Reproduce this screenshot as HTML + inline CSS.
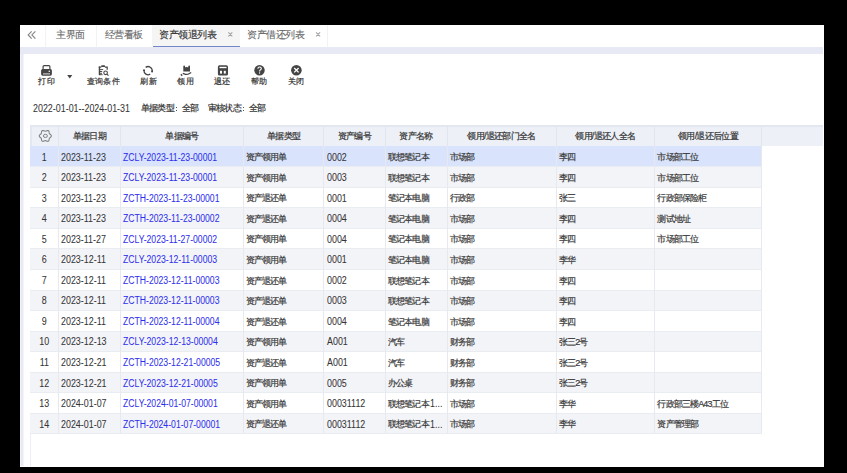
<!DOCTYPE html>
<html><head><meta charset="utf-8"><style>
html,body{margin:0;padding:0}
body{width:847px;height:473px;background:#000;position:relative;overflow:hidden;font-family:"Liberation Sans",sans-serif;color:#333}
.a{position:absolute}
.t{position:absolute;white-space:nowrap;line-height:1}
svg{position:absolute;left:0;top:0;overflow:visible}
</style></head><body>
<div class="a" style="left:20px;top:25px;width:804px;height:442px;background:#fff"></div>
<div class="a" style="left:45px;top:25px;width:1px;height:22px;background:#f2f2f2"></div>
<div class="a" style="left:96px;top:25px;width:1px;height:22px;background:#f2f2f2"></div>
<div class="a" style="left:152px;top:25px;width:87.5px;height:21px;background:#f5f5f5"></div>
<div class="a" style="left:152.5px;top:45.5px;width:87px;height:2px;background:#7485c9"></div>
<div class="a" style="left:327px;top:25px;width:1px;height:22px;background:#f2f2f2"></div>
<svg width="847" height="473"><path d="M31.7 31.3 L28.2 34.9 L31.7 38.6 M35.4 31.3 L31.9 34.9 L35.4 38.6" fill="none" stroke="#888" stroke-width="1.2"/><path d="M228.4 32.4 L232.3 36.4 M232.3 32.4 L228.4 36.4 M316.1 32.4 L320.1 36.4 M320.1 32.4 L316.1 36.4" fill="none" stroke="#a3a3a3" stroke-width="1.1"/></svg>
<div class="t" style="left:56px;top:30px;font-size:10px;color:#666;-webkit-text-stroke:0.1px #666;letter-spacing:-0.5px;">主界面</div>
<div class="t" style="left:104.5px;top:30px;font-size:10px;color:#666;-webkit-text-stroke:0.1px #666;letter-spacing:-0.5px;">经营看板</div>
<div class="t" style="left:159px;top:30px;font-size:10px;color:#333;-webkit-text-stroke:0.15px #333;letter-spacing:-0.5px;">资产领退列表</div>
<div class="t" style="left:247px;top:30px;font-size:10px;color:#666;-webkit-text-stroke:0.1px #666;letter-spacing:-0.5px;">资产借还列表</div>
<div class="a" style="left:20px;top:47px;width:803px;height:7px;background:#e7eaf4"></div>
<div class="a" style="left:20px;top:54px;width:1px;height:412px;background:#f1f3f9"></div>
<div class="a" style="left:21px;top:54px;width:2px;height:412px;background:#e7eaf4"></div>
<div class="a" style="left:23px;top:54px;width:1px;height:412px;background:#f3f5fa"></div>
<div class="a" style="left:30px;top:146px;width:1px;height:320px;background:#eceef4"></div>
<svg width="847" height="473">
<rect x="43.1" y="65.6" width="6.8" height="4.6" rx="1" fill="none" stroke="#444" stroke-width="1.2"/>
<rect x="41.1" y="69" width="10.8" height="6.7" rx="1.6" fill="#444"/>
<circle cx="49.3" cy="71.2" r="0.8" fill="#fff"/>
<rect x="43" y="73.4" width="7" height="1" fill="#ddd"/>
<path d="M67.2 75 L72.3 75 L69.75 78.6 Z" fill="#444"/>
<path d="M99.45 66.6 V75.1" stroke="#444" stroke-width="1.4"/>
<path d="M98.8 67.2 H101.3 M104.9 67.2 H107.2 V69.7" fill="none" stroke="#444" stroke-width="1.2"/>
<rect x="101.2" y="65.2" width="3.8" height="1.9" rx="0.6" fill="#444"/>
<path d="M99.2 69.6 H103.2 M99.2 71.5 H102.2 M99.2 73.3 H102 M99.2 74.7 H102.6" stroke="#444" stroke-width="0.95"/>
<circle cx="105.6" cy="72.8" r="1.8" fill="none" stroke="#444" stroke-width="1.1"/>
<path d="M106.9 74.1 L108.5 75.6" stroke="#444" stroke-width="1.1"/>
<path d="M145.63 67.38 A4.1 4.1 0 0 1 152.11 71.5" fill="none" stroke="#444" stroke-width="1.3"/>
<path d="M150.21 74.16 A4.1 4.1 0 0 1 144.03 70.15" fill="none" stroke="#444" stroke-width="1.3"/>
<circle cx="152.1" cy="71.4" r="1.0" fill="#444"/>
<circle cx="144.0" cy="70.2" r="1.0" fill="#444"/>
<path d="M183.3 66.2 Q183.3 65.5 184.15 65.5 Q185 65.5 185 66.2 L185 67.3 L186 67.3 Q186.65 66.3 187.3 67.3 L188.3 67.3 L188.3 66.2 Q188.3 65.5 189.15 65.5 Q190 65.5 190 66.2 L190 71.4 L183.3 71.4 Z" fill="#444"/>
<path d="M182.8 73.3 L185.5 74.3 Q187.5 74.7 189 73.7 L191.2 72.5" fill="none" stroke="#444" stroke-width="1.3"/>
<path d="M180.9 74.3 L182.2 75.7" stroke="#444" stroke-width="1.4"/>
<rect x="217.9" y="65.2" width="10.1" height="10.3" rx="1.6" fill="#444"/>
<rect x="219.5" y="66.8" width="7" height="1.4" fill="#fff"/>
<rect x="220" y="70.8" width="2" height="2.8" fill="#fff"/>
<rect x="223.8" y="70.8" width="2" height="2.8" fill="#fff"/>
<circle cx="259.5" cy="70.2" r="5.2" fill="#444"/>
<path d="M257.9 68.8 Q257.9 67 259.6 67 Q261.3 67 261.3 68.6 Q261.3 69.6 260.3 70.1 Q259.6 70.5 259.6 71.4" fill="none" stroke="#fff" stroke-width="1.1"/>
<circle cx="259.6" cy="73" r="0.65" fill="#fff"/>
<circle cx="296.4" cy="70.2" r="5.3" fill="#444"/>
<path d="M294.2 68 L298.6 72.4 M298.6 68 L294.2 72.4" stroke="#fff" stroke-width="1.3"/>
</svg>
<div class="t" style="left:-3.299999999999997px;top:78px;font-size:8px;color:#333;-webkit-text-stroke:0.2px #333;letter-spacing:0.3px;width:100px;text-align:center;">打印</div>
<div class="t" style="left:53.3px;top:78px;font-size:8px;color:#333;-webkit-text-stroke:0.2px #333;letter-spacing:0.3px;width:100px;text-align:center;">查询条件</div>
<div class="t" style="left:98.69999999999999px;top:78px;font-size:8px;color:#333;-webkit-text-stroke:0.2px #333;letter-spacing:0.3px;width:100px;text-align:center;">刷新</div>
<div class="t" style="left:135.7px;top:78px;font-size:8px;color:#333;-webkit-text-stroke:0.2px #333;letter-spacing:0.3px;width:100px;text-align:center;">领用</div>
<div class="t" style="left:172.2px;top:78px;font-size:8px;color:#333;-webkit-text-stroke:0.2px #333;letter-spacing:0.3px;width:100px;text-align:center;">退还</div>
<div class="t" style="left:209.5px;top:78px;font-size:8px;color:#333;-webkit-text-stroke:0.2px #333;letter-spacing:0.3px;width:100px;text-align:center;">帮助</div>
<div class="t" style="left:246.5px;top:78px;font-size:8px;color:#333;-webkit-text-stroke:0.2px #333;letter-spacing:0.3px;width:100px;text-align:center;">关闭</div>
<div class="t" style="left:33px;top:103.5px;font-size:10px;color:#333;-webkit-text-stroke:0.05px #333;transform:scaleX(0.89);transform-origin:0 0;">2022-01-01--2024-01-31</div>
<div class="t" style="left:141px;top:104px;font-size:9px;color:#333;-webkit-text-stroke:0.2px #333;letter-spacing:-0.8px;">单据类型</div>
<div class="a" style="left:175.6px;top:106.8px;width:1.1px;height:1.1px;background:#555"></div>
<div class="a" style="left:175.6px;top:110.2px;width:1.1px;height:1.1px;background:#555"></div>
<div class="t" style="left:182px;top:104px;font-size:9px;color:#333;-webkit-text-stroke:0.2px #333;letter-spacing:-0.8px;">全部</div>
<div class="t" style="left:208px;top:104px;font-size:9px;color:#333;-webkit-text-stroke:0.2px #333;letter-spacing:-0.8px;">审核状态</div>
<div class="a" style="left:242.6px;top:106.8px;width:1.1px;height:1.1px;background:#555"></div>
<div class="a" style="left:242.6px;top:110.2px;width:1.1px;height:1.1px;background:#555"></div>
<div class="t" style="left:249px;top:104px;font-size:9px;color:#333;-webkit-text-stroke:0.2px #333;letter-spacing:-0.8px;">全部</div>
<div class="a" style="left:30px;top:125px;width:793px;height:21.3px;background:#e3e7ef"></div>
<div class="a" style="left:31.5px;top:126.5px;width:791.5px;height:19.8px;background:#edf0f7"></div>
<div class="a" style="left:58.1px;top:126px;width:1px;height:20.3px;background:#e1e5ed"></div>
<div class="a" style="left:119.8px;top:126px;width:1px;height:20.3px;background:#e1e5ed"></div>
<div class="a" style="left:243.0px;top:126px;width:1px;height:20.3px;background:#e1e5ed"></div>
<div class="a" style="left:323.2px;top:126px;width:1px;height:20.3px;background:#e1e5ed"></div>
<div class="a" style="left:384.5px;top:126px;width:1px;height:20.3px;background:#e1e5ed"></div>
<div class="a" style="left:446.7px;top:126px;width:1px;height:20.3px;background:#e1e5ed"></div>
<div class="a" style="left:555.5px;top:126px;width:1px;height:20.3px;background:#e1e5ed"></div>
<div class="a" style="left:653.9px;top:126px;width:1px;height:20.3px;background:#e1e5ed"></div>
<div class="a" style="left:761.1px;top:126px;width:1px;height:20.3px;background:#e1e5ed"></div>
<svg width="847" height="473"><polygon points="45.30,131.20 45.94,131.04 46.70,130.68 47.56,130.45 48.35,130.62 48.89,131.22 49.12,132.08 49.19,132.91 49.37,133.55 49.83,134.02 50.52,134.50 51.14,135.13 51.40,135.90 51.14,136.67 50.52,137.30 49.83,137.78 49.37,138.25 49.19,138.89 49.12,139.72 48.89,140.58 48.35,141.18 47.56,141.35 46.70,141.12 45.94,140.76 45.30,140.60 44.66,140.76 43.90,141.12 43.04,141.35 42.25,141.18 41.71,140.58 41.48,139.72 41.41,138.89 41.23,138.25 40.77,137.78 40.08,137.30 39.46,136.67 39.20,135.90 39.46,135.13 40.08,134.50 40.77,134.02 41.23,133.55 41.41,132.91 41.48,132.08 41.71,131.22 42.25,130.62 43.04,130.45 43.90,130.68 44.66,131.04" fill="none" stroke="#808080" stroke-width="1.05" stroke-linejoin="round"/><ellipse cx="45.4" cy="135.9" rx="2" ry="1.6" fill="none" stroke="#808080" stroke-width="1"/></svg>
<div class="t" style="left:58.6px;top:132px;font-size:9px;color:#333;-webkit-text-stroke:0.2px #333;letter-spacing:-0.7px;width:61.699999999999996px;text-align:center;">单据日期</div>
<div class="t" style="left:120.3px;top:132px;font-size:9px;color:#333;-webkit-text-stroke:0.2px #333;letter-spacing:-0.7px;width:123.2px;text-align:center;">单据编号</div>
<div class="t" style="left:243.5px;top:132px;font-size:9px;color:#333;-webkit-text-stroke:0.2px #333;letter-spacing:-0.7px;width:80.19999999999999px;text-align:center;">单据类型</div>
<div class="t" style="left:323.7px;top:132px;font-size:9px;color:#333;-webkit-text-stroke:0.2px #333;letter-spacing:-0.7px;width:61.30000000000001px;text-align:center;">资产编号</div>
<div class="t" style="left:385px;top:132px;font-size:9px;color:#333;-webkit-text-stroke:0.2px #333;letter-spacing:-0.7px;width:62.19999999999999px;text-align:center;">资产名称</div>
<div class="t" style="left:447.2px;top:132px;font-size:9px;color:#333;-webkit-text-stroke:0.2px #333;letter-spacing:-0.7px;width:108.80000000000001px;text-align:center;">领用/退还部门全名</div>
<div class="t" style="left:556px;top:132px;font-size:9px;color:#333;-webkit-text-stroke:0.2px #333;letter-spacing:-0.7px;width:98.39999999999998px;text-align:center;">领用/退还人全名</div>
<div class="t" style="left:654.4px;top:132px;font-size:9px;color:#333;-webkit-text-stroke:0.2px #333;letter-spacing:-0.7px;width:107.20000000000005px;text-align:center;">领用/退还后位置</div>
<div class="a" style="left:30px;top:146px;width:731.6px;height:20px;background:#d9e4fc"></div>
<div class="a" style="left:30px;top:166px;width:731.6px;height:1px;background:#e9ecf1"></div>
<div class="a" style="left:58.1px;top:146px;width:1px;height:21px;background:#e6e9ef"></div>
<div class="a" style="left:119.8px;top:146px;width:1px;height:21px;background:#e6e9ef"></div>
<div class="a" style="left:243.0px;top:146px;width:1px;height:21px;background:#e6e9ef"></div>
<div class="a" style="left:323.2px;top:146px;width:1px;height:21px;background:#e6e9ef"></div>
<div class="a" style="left:384.5px;top:146px;width:1px;height:21px;background:#e6e9ef"></div>
<div class="a" style="left:446.7px;top:146px;width:1px;height:21px;background:#e6e9ef"></div>
<div class="a" style="left:555.5px;top:146px;width:1px;height:21px;background:#e6e9ef"></div>
<div class="a" style="left:653.9px;top:146px;width:1px;height:21px;background:#e6e9ef"></div>
<div class="a" style="left:761.1px;top:146px;width:1px;height:21px;background:#e6e9ef"></div>
<div class="a" style="left:30px;top:167px;width:731.6px;height:20px;background:#f3f4f8"></div>
<div class="a" style="left:30px;top:187px;width:731.6px;height:1px;background:#e9ecf1"></div>
<div class="a" style="left:58.1px;top:167px;width:1px;height:21px;background:#e6e9ef"></div>
<div class="a" style="left:119.8px;top:167px;width:1px;height:21px;background:#e6e9ef"></div>
<div class="a" style="left:243.0px;top:167px;width:1px;height:21px;background:#e6e9ef"></div>
<div class="a" style="left:323.2px;top:167px;width:1px;height:21px;background:#e6e9ef"></div>
<div class="a" style="left:384.5px;top:167px;width:1px;height:21px;background:#e6e9ef"></div>
<div class="a" style="left:446.7px;top:167px;width:1px;height:21px;background:#e6e9ef"></div>
<div class="a" style="left:555.5px;top:167px;width:1px;height:21px;background:#e6e9ef"></div>
<div class="a" style="left:653.9px;top:167px;width:1px;height:21px;background:#e6e9ef"></div>
<div class="a" style="left:761.1px;top:167px;width:1px;height:21px;background:#e6e9ef"></div>
<div class="a" style="left:30px;top:188px;width:731.6px;height:19px;background:#ffffff"></div>
<div class="a" style="left:30px;top:207px;width:731.6px;height:1px;background:#e9ecf1"></div>
<div class="a" style="left:58.1px;top:188px;width:1px;height:20px;background:#e6e9ef"></div>
<div class="a" style="left:119.8px;top:188px;width:1px;height:20px;background:#e6e9ef"></div>
<div class="a" style="left:243.0px;top:188px;width:1px;height:20px;background:#e6e9ef"></div>
<div class="a" style="left:323.2px;top:188px;width:1px;height:20px;background:#e6e9ef"></div>
<div class="a" style="left:384.5px;top:188px;width:1px;height:20px;background:#e6e9ef"></div>
<div class="a" style="left:446.7px;top:188px;width:1px;height:20px;background:#e6e9ef"></div>
<div class="a" style="left:555.5px;top:188px;width:1px;height:20px;background:#e6e9ef"></div>
<div class="a" style="left:653.9px;top:188px;width:1px;height:20px;background:#e6e9ef"></div>
<div class="a" style="left:761.1px;top:188px;width:1px;height:20px;background:#e6e9ef"></div>
<div class="a" style="left:30px;top:208px;width:731.6px;height:20px;background:#f3f4f8"></div>
<div class="a" style="left:30px;top:228px;width:731.6px;height:1px;background:#e9ecf1"></div>
<div class="a" style="left:58.1px;top:208px;width:1px;height:21px;background:#e6e9ef"></div>
<div class="a" style="left:119.8px;top:208px;width:1px;height:21px;background:#e6e9ef"></div>
<div class="a" style="left:243.0px;top:208px;width:1px;height:21px;background:#e6e9ef"></div>
<div class="a" style="left:323.2px;top:208px;width:1px;height:21px;background:#e6e9ef"></div>
<div class="a" style="left:384.5px;top:208px;width:1px;height:21px;background:#e6e9ef"></div>
<div class="a" style="left:446.7px;top:208px;width:1px;height:21px;background:#e6e9ef"></div>
<div class="a" style="left:555.5px;top:208px;width:1px;height:21px;background:#e6e9ef"></div>
<div class="a" style="left:653.9px;top:208px;width:1px;height:21px;background:#e6e9ef"></div>
<div class="a" style="left:761.1px;top:208px;width:1px;height:21px;background:#e6e9ef"></div>
<div class="a" style="left:30px;top:229px;width:731.6px;height:19px;background:#ffffff"></div>
<div class="a" style="left:30px;top:248px;width:731.6px;height:1px;background:#e9ecf1"></div>
<div class="a" style="left:58.1px;top:229px;width:1px;height:20px;background:#e6e9ef"></div>
<div class="a" style="left:119.8px;top:229px;width:1px;height:20px;background:#e6e9ef"></div>
<div class="a" style="left:243.0px;top:229px;width:1px;height:20px;background:#e6e9ef"></div>
<div class="a" style="left:323.2px;top:229px;width:1px;height:20px;background:#e6e9ef"></div>
<div class="a" style="left:384.5px;top:229px;width:1px;height:20px;background:#e6e9ef"></div>
<div class="a" style="left:446.7px;top:229px;width:1px;height:20px;background:#e6e9ef"></div>
<div class="a" style="left:555.5px;top:229px;width:1px;height:20px;background:#e6e9ef"></div>
<div class="a" style="left:653.9px;top:229px;width:1px;height:20px;background:#e6e9ef"></div>
<div class="a" style="left:761.1px;top:229px;width:1px;height:20px;background:#e6e9ef"></div>
<div class="a" style="left:30px;top:249px;width:731.6px;height:20px;background:#f3f4f8"></div>
<div class="a" style="left:30px;top:269px;width:731.6px;height:1px;background:#e9ecf1"></div>
<div class="a" style="left:58.1px;top:249px;width:1px;height:21px;background:#e6e9ef"></div>
<div class="a" style="left:119.8px;top:249px;width:1px;height:21px;background:#e6e9ef"></div>
<div class="a" style="left:243.0px;top:249px;width:1px;height:21px;background:#e6e9ef"></div>
<div class="a" style="left:323.2px;top:249px;width:1px;height:21px;background:#e6e9ef"></div>
<div class="a" style="left:384.5px;top:249px;width:1px;height:21px;background:#e6e9ef"></div>
<div class="a" style="left:446.7px;top:249px;width:1px;height:21px;background:#e6e9ef"></div>
<div class="a" style="left:555.5px;top:249px;width:1px;height:21px;background:#e6e9ef"></div>
<div class="a" style="left:653.9px;top:249px;width:1px;height:21px;background:#e6e9ef"></div>
<div class="a" style="left:761.1px;top:249px;width:1px;height:21px;background:#e6e9ef"></div>
<div class="a" style="left:30px;top:270px;width:731.6px;height:20px;background:#ffffff"></div>
<div class="a" style="left:30px;top:290px;width:731.6px;height:1px;background:#e9ecf1"></div>
<div class="a" style="left:58.1px;top:270px;width:1px;height:21px;background:#e6e9ef"></div>
<div class="a" style="left:119.8px;top:270px;width:1px;height:21px;background:#e6e9ef"></div>
<div class="a" style="left:243.0px;top:270px;width:1px;height:21px;background:#e6e9ef"></div>
<div class="a" style="left:323.2px;top:270px;width:1px;height:21px;background:#e6e9ef"></div>
<div class="a" style="left:384.5px;top:270px;width:1px;height:21px;background:#e6e9ef"></div>
<div class="a" style="left:446.7px;top:270px;width:1px;height:21px;background:#e6e9ef"></div>
<div class="a" style="left:555.5px;top:270px;width:1px;height:21px;background:#e6e9ef"></div>
<div class="a" style="left:653.9px;top:270px;width:1px;height:21px;background:#e6e9ef"></div>
<div class="a" style="left:761.1px;top:270px;width:1px;height:21px;background:#e6e9ef"></div>
<div class="a" style="left:30px;top:291px;width:731.6px;height:19px;background:#f3f4f8"></div>
<div class="a" style="left:30px;top:310px;width:731.6px;height:1px;background:#e9ecf1"></div>
<div class="a" style="left:58.1px;top:291px;width:1px;height:20px;background:#e6e9ef"></div>
<div class="a" style="left:119.8px;top:291px;width:1px;height:20px;background:#e6e9ef"></div>
<div class="a" style="left:243.0px;top:291px;width:1px;height:20px;background:#e6e9ef"></div>
<div class="a" style="left:323.2px;top:291px;width:1px;height:20px;background:#e6e9ef"></div>
<div class="a" style="left:384.5px;top:291px;width:1px;height:20px;background:#e6e9ef"></div>
<div class="a" style="left:446.7px;top:291px;width:1px;height:20px;background:#e6e9ef"></div>
<div class="a" style="left:555.5px;top:291px;width:1px;height:20px;background:#e6e9ef"></div>
<div class="a" style="left:653.9px;top:291px;width:1px;height:20px;background:#e6e9ef"></div>
<div class="a" style="left:761.1px;top:291px;width:1px;height:20px;background:#e6e9ef"></div>
<div class="a" style="left:30px;top:311px;width:731.6px;height:20px;background:#ffffff"></div>
<div class="a" style="left:30px;top:331px;width:731.6px;height:1px;background:#e9ecf1"></div>
<div class="a" style="left:58.1px;top:311px;width:1px;height:21px;background:#e6e9ef"></div>
<div class="a" style="left:119.8px;top:311px;width:1px;height:21px;background:#e6e9ef"></div>
<div class="a" style="left:243.0px;top:311px;width:1px;height:21px;background:#e6e9ef"></div>
<div class="a" style="left:323.2px;top:311px;width:1px;height:21px;background:#e6e9ef"></div>
<div class="a" style="left:384.5px;top:311px;width:1px;height:21px;background:#e6e9ef"></div>
<div class="a" style="left:446.7px;top:311px;width:1px;height:21px;background:#e6e9ef"></div>
<div class="a" style="left:555.5px;top:311px;width:1px;height:21px;background:#e6e9ef"></div>
<div class="a" style="left:653.9px;top:311px;width:1px;height:21px;background:#e6e9ef"></div>
<div class="a" style="left:761.1px;top:311px;width:1px;height:21px;background:#e6e9ef"></div>
<div class="a" style="left:30px;top:332px;width:731.6px;height:19px;background:#f3f4f8"></div>
<div class="a" style="left:30px;top:351px;width:731.6px;height:1px;background:#e9ecf1"></div>
<div class="a" style="left:58.1px;top:332px;width:1px;height:20px;background:#e6e9ef"></div>
<div class="a" style="left:119.8px;top:332px;width:1px;height:20px;background:#e6e9ef"></div>
<div class="a" style="left:243.0px;top:332px;width:1px;height:20px;background:#e6e9ef"></div>
<div class="a" style="left:323.2px;top:332px;width:1px;height:20px;background:#e6e9ef"></div>
<div class="a" style="left:384.5px;top:332px;width:1px;height:20px;background:#e6e9ef"></div>
<div class="a" style="left:446.7px;top:332px;width:1px;height:20px;background:#e6e9ef"></div>
<div class="a" style="left:555.5px;top:332px;width:1px;height:20px;background:#e6e9ef"></div>
<div class="a" style="left:653.9px;top:332px;width:1px;height:20px;background:#e6e9ef"></div>
<div class="a" style="left:761.1px;top:332px;width:1px;height:20px;background:#e6e9ef"></div>
<div class="a" style="left:30px;top:352px;width:731.6px;height:20px;background:#ffffff"></div>
<div class="a" style="left:30px;top:372px;width:731.6px;height:1px;background:#e9ecf1"></div>
<div class="a" style="left:58.1px;top:352px;width:1px;height:21px;background:#e6e9ef"></div>
<div class="a" style="left:119.8px;top:352px;width:1px;height:21px;background:#e6e9ef"></div>
<div class="a" style="left:243.0px;top:352px;width:1px;height:21px;background:#e6e9ef"></div>
<div class="a" style="left:323.2px;top:352px;width:1px;height:21px;background:#e6e9ef"></div>
<div class="a" style="left:384.5px;top:352px;width:1px;height:21px;background:#e6e9ef"></div>
<div class="a" style="left:446.7px;top:352px;width:1px;height:21px;background:#e6e9ef"></div>
<div class="a" style="left:555.5px;top:352px;width:1px;height:21px;background:#e6e9ef"></div>
<div class="a" style="left:653.9px;top:352px;width:1px;height:21px;background:#e6e9ef"></div>
<div class="a" style="left:761.1px;top:352px;width:1px;height:21px;background:#e6e9ef"></div>
<div class="a" style="left:30px;top:373px;width:731.6px;height:19px;background:#f3f4f8"></div>
<div class="a" style="left:30px;top:392px;width:731.6px;height:1px;background:#e9ecf1"></div>
<div class="a" style="left:58.1px;top:373px;width:1px;height:20px;background:#e6e9ef"></div>
<div class="a" style="left:119.8px;top:373px;width:1px;height:20px;background:#e6e9ef"></div>
<div class="a" style="left:243.0px;top:373px;width:1px;height:20px;background:#e6e9ef"></div>
<div class="a" style="left:323.2px;top:373px;width:1px;height:20px;background:#e6e9ef"></div>
<div class="a" style="left:384.5px;top:373px;width:1px;height:20px;background:#e6e9ef"></div>
<div class="a" style="left:446.7px;top:373px;width:1px;height:20px;background:#e6e9ef"></div>
<div class="a" style="left:555.5px;top:373px;width:1px;height:20px;background:#e6e9ef"></div>
<div class="a" style="left:653.9px;top:373px;width:1px;height:20px;background:#e6e9ef"></div>
<div class="a" style="left:761.1px;top:373px;width:1px;height:20px;background:#e6e9ef"></div>
<div class="a" style="left:30px;top:393px;width:731.6px;height:20px;background:#ffffff"></div>
<div class="a" style="left:30px;top:413px;width:731.6px;height:1px;background:#e9ecf1"></div>
<div class="a" style="left:58.1px;top:393px;width:1px;height:21px;background:#e6e9ef"></div>
<div class="a" style="left:119.8px;top:393px;width:1px;height:21px;background:#e6e9ef"></div>
<div class="a" style="left:243.0px;top:393px;width:1px;height:21px;background:#e6e9ef"></div>
<div class="a" style="left:323.2px;top:393px;width:1px;height:21px;background:#e6e9ef"></div>
<div class="a" style="left:384.5px;top:393px;width:1px;height:21px;background:#e6e9ef"></div>
<div class="a" style="left:446.7px;top:393px;width:1px;height:21px;background:#e6e9ef"></div>
<div class="a" style="left:555.5px;top:393px;width:1px;height:21px;background:#e6e9ef"></div>
<div class="a" style="left:653.9px;top:393px;width:1px;height:21px;background:#e6e9ef"></div>
<div class="a" style="left:761.1px;top:393px;width:1px;height:21px;background:#e6e9ef"></div>
<div class="a" style="left:30px;top:414px;width:731.6px;height:19px;background:#f3f4f8"></div>
<div class="a" style="left:30px;top:433px;width:731.6px;height:1px;background:#e9ecf1"></div>
<div class="a" style="left:58.1px;top:414px;width:1px;height:20px;background:#e6e9ef"></div>
<div class="a" style="left:119.8px;top:414px;width:1px;height:20px;background:#e6e9ef"></div>
<div class="a" style="left:243.0px;top:414px;width:1px;height:20px;background:#e6e9ef"></div>
<div class="a" style="left:323.2px;top:414px;width:1px;height:20px;background:#e6e9ef"></div>
<div class="a" style="left:384.5px;top:414px;width:1px;height:20px;background:#e6e9ef"></div>
<div class="a" style="left:446.7px;top:414px;width:1px;height:20px;background:#e6e9ef"></div>
<div class="a" style="left:555.5px;top:414px;width:1px;height:20px;background:#e6e9ef"></div>
<div class="a" style="left:653.9px;top:414px;width:1px;height:20px;background:#e6e9ef"></div>
<div class="a" style="left:761.1px;top:414px;width:1px;height:20px;background:#e6e9ef"></div>
<div class="t" style="left:30px;top:152.60000000000002px;font-size:10px;color:#333;-webkit-text-stroke:0.05px #333;width:28.6px;text-align:center;transform:scaleX(0.89);transform-origin:50% 0;">1</div>
<div class="t" style="left:60.800000000000004px;top:152.60000000000002px;font-size:10px;color:#333;-webkit-text-stroke:0.05px #333;transform:scaleX(0.89);transform-origin:0 0;">2023-11-23</div>
<div class="t" style="left:123.3px;top:152.60000000000002px;font-size:10px;color:#2f2fee;-webkit-text-stroke:0.05px #2f2fee;transform:scaleX(0.865);transform-origin:0 0;">ZCLY-2023-11-23-00001</div>
<div class="t" style="left:245.7px;top:153.3px;font-size:9px;color:#3a3a3a;-webkit-text-stroke:0.2px #3a3a3a;letter-spacing:-0.85px;">资产领用单</div>
<div class="t" style="left:326.7px;top:152.60000000000002px;font-size:10px;color:#333;-webkit-text-stroke:0.05px #333;transform:scaleX(0.89);transform-origin:0 0;">0002</div>
<div class="t" style="left:388px;top:153.3px;font-size:9px;color:#3a3a3a;-webkit-text-stroke:0.2px #3a3a3a;letter-spacing:-0.85px;">联想笔记本</div>
<div class="t" style="left:450.2px;top:153.3px;font-size:9px;color:#3a3a3a;-webkit-text-stroke:0.2px #3a3a3a;letter-spacing:-0.85px;">市场部</div>
<div class="t" style="left:559px;top:153.3px;font-size:9px;color:#3a3a3a;-webkit-text-stroke:0.2px #3a3a3a;letter-spacing:-0.85px;">李四</div>
<div class="t" style="left:657.4px;top:153.3px;font-size:9px;color:#3a3a3a;-webkit-text-stroke:0.2px #3a3a3a;letter-spacing:-0.85px;">市场部工位</div>
<div class="t" style="left:30px;top:173.14000000000001px;font-size:10px;color:#333;-webkit-text-stroke:0.05px #333;width:28.6px;text-align:center;transform:scaleX(0.89);transform-origin:50% 0;">2</div>
<div class="t" style="left:60.800000000000004px;top:173.14000000000001px;font-size:10px;color:#333;-webkit-text-stroke:0.05px #333;transform:scaleX(0.89);transform-origin:0 0;">2023-11-23</div>
<div class="t" style="left:123.3px;top:173.14000000000001px;font-size:10px;color:#2f2fee;-webkit-text-stroke:0.05px #2f2fee;transform:scaleX(0.865);transform-origin:0 0;">ZCLY-2023-11-23-00001</div>
<div class="t" style="left:245.7px;top:173.84px;font-size:9px;color:#3a3a3a;-webkit-text-stroke:0.2px #3a3a3a;letter-spacing:-0.85px;">资产领用单</div>
<div class="t" style="left:326.7px;top:173.14000000000001px;font-size:10px;color:#333;-webkit-text-stroke:0.05px #333;transform:scaleX(0.89);transform-origin:0 0;">0003</div>
<div class="t" style="left:388px;top:173.84px;font-size:9px;color:#3a3a3a;-webkit-text-stroke:0.2px #3a3a3a;letter-spacing:-0.85px;">联想笔记本</div>
<div class="t" style="left:450.2px;top:173.84px;font-size:9px;color:#3a3a3a;-webkit-text-stroke:0.2px #3a3a3a;letter-spacing:-0.85px;">市场部</div>
<div class="t" style="left:559px;top:173.84px;font-size:9px;color:#3a3a3a;-webkit-text-stroke:0.2px #3a3a3a;letter-spacing:-0.85px;">李四</div>
<div class="t" style="left:657.4px;top:173.84px;font-size:9px;color:#3a3a3a;-webkit-text-stroke:0.2px #3a3a3a;letter-spacing:-0.85px;">市场部工位</div>
<div class="t" style="left:30px;top:193.68px;font-size:10px;color:#333;-webkit-text-stroke:0.05px #333;width:28.6px;text-align:center;transform:scaleX(0.89);transform-origin:50% 0;">3</div>
<div class="t" style="left:60.800000000000004px;top:193.68px;font-size:10px;color:#333;-webkit-text-stroke:0.05px #333;transform:scaleX(0.89);transform-origin:0 0;">2023-11-23</div>
<div class="t" style="left:123.3px;top:193.68px;font-size:10px;color:#2f2fee;-webkit-text-stroke:0.05px #2f2fee;transform:scaleX(0.865);transform-origin:0 0;">ZCTH-2023-11-23-00001</div>
<div class="t" style="left:245.7px;top:194.38px;font-size:9px;color:#3a3a3a;-webkit-text-stroke:0.2px #3a3a3a;letter-spacing:-0.85px;">资产退还单</div>
<div class="t" style="left:326.7px;top:193.68px;font-size:10px;color:#333;-webkit-text-stroke:0.05px #333;transform:scaleX(0.89);transform-origin:0 0;">0001</div>
<div class="t" style="left:388px;top:194.38px;font-size:9px;color:#3a3a3a;-webkit-text-stroke:0.2px #3a3a3a;letter-spacing:-0.85px;">笔记本电脑</div>
<div class="t" style="left:450.2px;top:194.38px;font-size:9px;color:#3a3a3a;-webkit-text-stroke:0.2px #3a3a3a;letter-spacing:-0.85px;">行政部</div>
<div class="t" style="left:559px;top:194.38px;font-size:9px;color:#3a3a3a;-webkit-text-stroke:0.2px #3a3a3a;letter-spacing:-0.85px;">张三</div>
<div class="t" style="left:657.4px;top:194.38px;font-size:9px;color:#3a3a3a;-webkit-text-stroke:0.2px #3a3a3a;letter-spacing:-0.85px;">行政部保险柜</div>
<div class="t" style="left:30px;top:214.22000000000003px;font-size:10px;color:#333;-webkit-text-stroke:0.05px #333;width:28.6px;text-align:center;transform:scaleX(0.89);transform-origin:50% 0;">4</div>
<div class="t" style="left:60.800000000000004px;top:214.22000000000003px;font-size:10px;color:#333;-webkit-text-stroke:0.05px #333;transform:scaleX(0.89);transform-origin:0 0;">2023-11-23</div>
<div class="t" style="left:123.3px;top:214.22000000000003px;font-size:10px;color:#2f2fee;-webkit-text-stroke:0.05px #2f2fee;transform:scaleX(0.865);transform-origin:0 0;">ZCTH-2023-11-23-00002</div>
<div class="t" style="left:245.7px;top:214.92000000000002px;font-size:9px;color:#3a3a3a;-webkit-text-stroke:0.2px #3a3a3a;letter-spacing:-0.85px;">资产退还单</div>
<div class="t" style="left:326.7px;top:214.22000000000003px;font-size:10px;color:#333;-webkit-text-stroke:0.05px #333;transform:scaleX(0.89);transform-origin:0 0;">0004</div>
<div class="t" style="left:388px;top:214.92000000000002px;font-size:9px;color:#3a3a3a;-webkit-text-stroke:0.2px #3a3a3a;letter-spacing:-0.85px;">笔记本电脑</div>
<div class="t" style="left:450.2px;top:214.92000000000002px;font-size:9px;color:#3a3a3a;-webkit-text-stroke:0.2px #3a3a3a;letter-spacing:-0.85px;">市场部</div>
<div class="t" style="left:559px;top:214.92000000000002px;font-size:9px;color:#3a3a3a;-webkit-text-stroke:0.2px #3a3a3a;letter-spacing:-0.85px;">李四</div>
<div class="t" style="left:657.4px;top:214.92000000000002px;font-size:9px;color:#3a3a3a;-webkit-text-stroke:0.2px #3a3a3a;letter-spacing:-0.85px;">测试地址</div>
<div class="t" style="left:30px;top:234.76000000000002px;font-size:10px;color:#333;-webkit-text-stroke:0.05px #333;width:28.6px;text-align:center;transform:scaleX(0.89);transform-origin:50% 0;">5</div>
<div class="t" style="left:60.800000000000004px;top:234.76000000000002px;font-size:10px;color:#333;-webkit-text-stroke:0.05px #333;transform:scaleX(0.89);transform-origin:0 0;">2023-11-27</div>
<div class="t" style="left:123.3px;top:234.76000000000002px;font-size:10px;color:#2f2fee;-webkit-text-stroke:0.05px #2f2fee;transform:scaleX(0.865);transform-origin:0 0;">ZCLY-2023-11-27-00002</div>
<div class="t" style="left:245.7px;top:235.46px;font-size:9px;color:#3a3a3a;-webkit-text-stroke:0.2px #3a3a3a;letter-spacing:-0.85px;">资产领用单</div>
<div class="t" style="left:326.7px;top:234.76000000000002px;font-size:10px;color:#333;-webkit-text-stroke:0.05px #333;transform:scaleX(0.89);transform-origin:0 0;">0004</div>
<div class="t" style="left:388px;top:235.46px;font-size:9px;color:#3a3a3a;-webkit-text-stroke:0.2px #3a3a3a;letter-spacing:-0.85px;">笔记本电脑</div>
<div class="t" style="left:450.2px;top:235.46px;font-size:9px;color:#3a3a3a;-webkit-text-stroke:0.2px #3a3a3a;letter-spacing:-0.85px;">市场部</div>
<div class="t" style="left:559px;top:235.46px;font-size:9px;color:#3a3a3a;-webkit-text-stroke:0.2px #3a3a3a;letter-spacing:-0.85px;">李四</div>
<div class="t" style="left:657.4px;top:235.46px;font-size:9px;color:#3a3a3a;-webkit-text-stroke:0.2px #3a3a3a;letter-spacing:-0.85px;">市场部工位</div>
<div class="t" style="left:30px;top:255.3px;font-size:10px;color:#333;-webkit-text-stroke:0.05px #333;width:28.6px;text-align:center;transform:scaleX(0.89);transform-origin:50% 0;">6</div>
<div class="t" style="left:60.800000000000004px;top:255.3px;font-size:10px;color:#333;-webkit-text-stroke:0.05px #333;transform:scaleX(0.89);transform-origin:0 0;">2023-12-11</div>
<div class="t" style="left:123.3px;top:255.3px;font-size:10px;color:#2f2fee;-webkit-text-stroke:0.05px #2f2fee;transform:scaleX(0.865);transform-origin:0 0;">ZCLY-2023-12-11-00003</div>
<div class="t" style="left:245.7px;top:256.0px;font-size:9px;color:#3a3a3a;-webkit-text-stroke:0.2px #3a3a3a;letter-spacing:-0.85px;">资产领用单</div>
<div class="t" style="left:326.7px;top:255.3px;font-size:10px;color:#333;-webkit-text-stroke:0.05px #333;transform:scaleX(0.89);transform-origin:0 0;">0001</div>
<div class="t" style="left:388px;top:256.0px;font-size:9px;color:#3a3a3a;-webkit-text-stroke:0.2px #3a3a3a;letter-spacing:-0.85px;">笔记本电脑</div>
<div class="t" style="left:450.2px;top:256.0px;font-size:9px;color:#3a3a3a;-webkit-text-stroke:0.2px #3a3a3a;letter-spacing:-0.85px;">市场部</div>
<div class="t" style="left:559px;top:256.0px;font-size:9px;color:#3a3a3a;-webkit-text-stroke:0.2px #3a3a3a;letter-spacing:-0.85px;">李华</div>
<div class="t" style="left:30px;top:275.84000000000003px;font-size:10px;color:#333;-webkit-text-stroke:0.05px #333;width:28.6px;text-align:center;transform:scaleX(0.89);transform-origin:50% 0;">7</div>
<div class="t" style="left:60.800000000000004px;top:275.84000000000003px;font-size:10px;color:#333;-webkit-text-stroke:0.05px #333;transform:scaleX(0.89);transform-origin:0 0;">2023-12-11</div>
<div class="t" style="left:123.3px;top:275.84000000000003px;font-size:10px;color:#2f2fee;-webkit-text-stroke:0.05px #2f2fee;transform:scaleX(0.865);transform-origin:0 0;">ZCTH-2023-12-11-00003</div>
<div class="t" style="left:245.7px;top:276.54px;font-size:9px;color:#3a3a3a;-webkit-text-stroke:0.2px #3a3a3a;letter-spacing:-0.85px;">资产退还单</div>
<div class="t" style="left:326.7px;top:275.84000000000003px;font-size:10px;color:#333;-webkit-text-stroke:0.05px #333;transform:scaleX(0.89);transform-origin:0 0;">0002</div>
<div class="t" style="left:388px;top:276.54px;font-size:9px;color:#3a3a3a;-webkit-text-stroke:0.2px #3a3a3a;letter-spacing:-0.85px;">联想笔记本</div>
<div class="t" style="left:450.2px;top:276.54px;font-size:9px;color:#3a3a3a;-webkit-text-stroke:0.2px #3a3a3a;letter-spacing:-0.85px;">市场部</div>
<div class="t" style="left:559px;top:276.54px;font-size:9px;color:#3a3a3a;-webkit-text-stroke:0.2px #3a3a3a;letter-spacing:-0.85px;">李四</div>
<div class="t" style="left:30px;top:296.38000000000005px;font-size:10px;color:#333;-webkit-text-stroke:0.05px #333;width:28.6px;text-align:center;transform:scaleX(0.89);transform-origin:50% 0;">8</div>
<div class="t" style="left:60.800000000000004px;top:296.38000000000005px;font-size:10px;color:#333;-webkit-text-stroke:0.05px #333;transform:scaleX(0.89);transform-origin:0 0;">2023-12-11</div>
<div class="t" style="left:123.3px;top:296.38000000000005px;font-size:10px;color:#2f2fee;-webkit-text-stroke:0.05px #2f2fee;transform:scaleX(0.865);transform-origin:0 0;">ZCTH-2023-12-11-00003</div>
<div class="t" style="left:245.7px;top:297.08000000000004px;font-size:9px;color:#3a3a3a;-webkit-text-stroke:0.2px #3a3a3a;letter-spacing:-0.85px;">资产退还单</div>
<div class="t" style="left:326.7px;top:296.38000000000005px;font-size:10px;color:#333;-webkit-text-stroke:0.05px #333;transform:scaleX(0.89);transform-origin:0 0;">0003</div>
<div class="t" style="left:388px;top:297.08000000000004px;font-size:9px;color:#3a3a3a;-webkit-text-stroke:0.2px #3a3a3a;letter-spacing:-0.85px;">联想笔记本</div>
<div class="t" style="left:450.2px;top:297.08000000000004px;font-size:9px;color:#3a3a3a;-webkit-text-stroke:0.2px #3a3a3a;letter-spacing:-0.85px;">市场部</div>
<div class="t" style="left:559px;top:297.08000000000004px;font-size:9px;color:#3a3a3a;-webkit-text-stroke:0.2px #3a3a3a;letter-spacing:-0.85px;">李四</div>
<div class="t" style="left:30px;top:316.92px;font-size:10px;color:#333;-webkit-text-stroke:0.05px #333;width:28.6px;text-align:center;transform:scaleX(0.89);transform-origin:50% 0;">9</div>
<div class="t" style="left:60.800000000000004px;top:316.92px;font-size:10px;color:#333;-webkit-text-stroke:0.05px #333;transform:scaleX(0.89);transform-origin:0 0;">2023-12-11</div>
<div class="t" style="left:123.3px;top:316.92px;font-size:10px;color:#2f2fee;-webkit-text-stroke:0.05px #2f2fee;transform:scaleX(0.865);transform-origin:0 0;">ZCTH-2023-12-11-00004</div>
<div class="t" style="left:245.7px;top:317.62px;font-size:9px;color:#3a3a3a;-webkit-text-stroke:0.2px #3a3a3a;letter-spacing:-0.85px;">资产退还单</div>
<div class="t" style="left:326.7px;top:316.92px;font-size:10px;color:#333;-webkit-text-stroke:0.05px #333;transform:scaleX(0.89);transform-origin:0 0;">0004</div>
<div class="t" style="left:388px;top:317.62px;font-size:9px;color:#3a3a3a;-webkit-text-stroke:0.2px #3a3a3a;letter-spacing:-0.85px;">笔记本电脑</div>
<div class="t" style="left:450.2px;top:317.62px;font-size:9px;color:#3a3a3a;-webkit-text-stroke:0.2px #3a3a3a;letter-spacing:-0.85px;">市场部</div>
<div class="t" style="left:559px;top:317.62px;font-size:9px;color:#3a3a3a;-webkit-text-stroke:0.2px #3a3a3a;letter-spacing:-0.85px;">李四</div>
<div class="t" style="left:30px;top:337.46px;font-size:10px;color:#333;-webkit-text-stroke:0.05px #333;width:28.6px;text-align:center;transform:scaleX(0.89);transform-origin:50% 0;">10</div>
<div class="t" style="left:60.800000000000004px;top:337.46px;font-size:10px;color:#333;-webkit-text-stroke:0.05px #333;transform:scaleX(0.89);transform-origin:0 0;">2023-12-13</div>
<div class="t" style="left:123.3px;top:337.46px;font-size:10px;color:#2f2fee;-webkit-text-stroke:0.05px #2f2fee;transform:scaleX(0.865);transform-origin:0 0;">ZCLY-2023-12-13-00004</div>
<div class="t" style="left:245.7px;top:338.15999999999997px;font-size:9px;color:#3a3a3a;-webkit-text-stroke:0.2px #3a3a3a;letter-spacing:-0.85px;">资产领用单</div>
<div class="t" style="left:326.7px;top:337.46px;font-size:10px;color:#333;-webkit-text-stroke:0.05px #333;transform:scaleX(0.89);transform-origin:0 0;">A001</div>
<div class="t" style="left:388px;top:338.15999999999997px;font-size:9px;color:#3a3a3a;-webkit-text-stroke:0.2px #3a3a3a;letter-spacing:-0.85px;">汽车</div>
<div class="t" style="left:450.2px;top:338.15999999999997px;font-size:9px;color:#3a3a3a;-webkit-text-stroke:0.2px #3a3a3a;letter-spacing:-0.85px;">财务部</div>
<div class="t" style="left:559px;top:338.15999999999997px;font-size:9px;color:#3a3a3a;-webkit-text-stroke:0.2px #3a3a3a;letter-spacing:-0.85px;">张三2号</div>
<div class="t" style="left:30px;top:358.0px;font-size:10px;color:#333;-webkit-text-stroke:0.05px #333;width:28.6px;text-align:center;transform:scaleX(0.89);transform-origin:50% 0;">11</div>
<div class="t" style="left:60.800000000000004px;top:358.0px;font-size:10px;color:#333;-webkit-text-stroke:0.05px #333;transform:scaleX(0.89);transform-origin:0 0;">2023-12-21</div>
<div class="t" style="left:123.3px;top:358.0px;font-size:10px;color:#2f2fee;-webkit-text-stroke:0.05px #2f2fee;transform:scaleX(0.865);transform-origin:0 0;">ZCTH-2023-12-21-00005</div>
<div class="t" style="left:245.7px;top:358.7px;font-size:9px;color:#3a3a3a;-webkit-text-stroke:0.2px #3a3a3a;letter-spacing:-0.85px;">资产退还单</div>
<div class="t" style="left:326.7px;top:358.0px;font-size:10px;color:#333;-webkit-text-stroke:0.05px #333;transform:scaleX(0.89);transform-origin:0 0;">A001</div>
<div class="t" style="left:388px;top:358.7px;font-size:9px;color:#3a3a3a;-webkit-text-stroke:0.2px #3a3a3a;letter-spacing:-0.85px;">汽车</div>
<div class="t" style="left:450.2px;top:358.7px;font-size:9px;color:#3a3a3a;-webkit-text-stroke:0.2px #3a3a3a;letter-spacing:-0.85px;">财务部</div>
<div class="t" style="left:559px;top:358.7px;font-size:9px;color:#3a3a3a;-webkit-text-stroke:0.2px #3a3a3a;letter-spacing:-0.85px;">张三2号</div>
<div class="t" style="left:30px;top:378.54px;font-size:10px;color:#333;-webkit-text-stroke:0.05px #333;width:28.6px;text-align:center;transform:scaleX(0.89);transform-origin:50% 0;">12</div>
<div class="t" style="left:60.800000000000004px;top:378.54px;font-size:10px;color:#333;-webkit-text-stroke:0.05px #333;transform:scaleX(0.89);transform-origin:0 0;">2023-12-21</div>
<div class="t" style="left:123.3px;top:378.54px;font-size:10px;color:#2f2fee;-webkit-text-stroke:0.05px #2f2fee;transform:scaleX(0.865);transform-origin:0 0;">ZCLY-2023-12-21-00005</div>
<div class="t" style="left:245.7px;top:379.24px;font-size:9px;color:#3a3a3a;-webkit-text-stroke:0.2px #3a3a3a;letter-spacing:-0.85px;">资产领用单</div>
<div class="t" style="left:326.7px;top:378.54px;font-size:10px;color:#333;-webkit-text-stroke:0.05px #333;transform:scaleX(0.89);transform-origin:0 0;">0005</div>
<div class="t" style="left:388px;top:379.24px;font-size:9px;color:#3a3a3a;-webkit-text-stroke:0.2px #3a3a3a;letter-spacing:-0.85px;">办公桌</div>
<div class="t" style="left:450.2px;top:379.24px;font-size:9px;color:#3a3a3a;-webkit-text-stroke:0.2px #3a3a3a;letter-spacing:-0.85px;">财务部</div>
<div class="t" style="left:559px;top:379.24px;font-size:9px;color:#3a3a3a;-webkit-text-stroke:0.2px #3a3a3a;letter-spacing:-0.85px;">张三2号</div>
<div class="t" style="left:30px;top:399.08px;font-size:10px;color:#333;-webkit-text-stroke:0.05px #333;width:28.6px;text-align:center;transform:scaleX(0.89);transform-origin:50% 0;">13</div>
<div class="t" style="left:60.800000000000004px;top:399.08px;font-size:10px;color:#333;-webkit-text-stroke:0.05px #333;transform:scaleX(0.89);transform-origin:0 0;">2024-01-07</div>
<div class="t" style="left:123.3px;top:399.08px;font-size:10px;color:#2f2fee;-webkit-text-stroke:0.05px #2f2fee;transform:scaleX(0.865);transform-origin:0 0;">ZCLY-2024-01-07-00001</div>
<div class="t" style="left:245.7px;top:399.78px;font-size:9px;color:#3a3a3a;-webkit-text-stroke:0.2px #3a3a3a;letter-spacing:-0.85px;">资产领用单</div>
<div class="t" style="left:326.7px;top:399.08px;font-size:10px;color:#333;-webkit-text-stroke:0.05px #333;transform:scaleX(0.89);transform-origin:0 0;">00031112</div>
<div class="t" style="left:388px;top:399.78px;font-size:9px;color:#3a3a3a;-webkit-text-stroke:0.2px #3a3a3a;letter-spacing:-0.85px;">联想笔记本</div>
<div class="t" style="left:429.5px;top:399.08px;font-size:10px;color:#333;-webkit-text-stroke:0.05px #333;transform:scaleX(0.89);transform-origin:0 0;">1...</div>
<div class="t" style="left:450.2px;top:399.78px;font-size:9px;color:#3a3a3a;-webkit-text-stroke:0.2px #3a3a3a;letter-spacing:-0.85px;">市场部</div>
<div class="t" style="left:559px;top:399.78px;font-size:9px;color:#3a3a3a;-webkit-text-stroke:0.2px #3a3a3a;letter-spacing:-0.85px;">李华</div>
<div class="t" style="left:657.4px;top:399.78px;font-size:9px;color:#3a3a3a;-webkit-text-stroke:0.2px #3a3a3a;letter-spacing:-0.85px;">行政部三楼A43工位</div>
<div class="t" style="left:30px;top:419.62px;font-size:10px;color:#333;-webkit-text-stroke:0.05px #333;width:28.6px;text-align:center;transform:scaleX(0.89);transform-origin:50% 0;">14</div>
<div class="t" style="left:60.800000000000004px;top:419.62px;font-size:10px;color:#333;-webkit-text-stroke:0.05px #333;transform:scaleX(0.89);transform-origin:0 0;">2024-01-07</div>
<div class="t" style="left:123.3px;top:419.62px;font-size:10px;color:#2f2fee;-webkit-text-stroke:0.05px #2f2fee;transform:scaleX(0.865);transform-origin:0 0;">ZCTH-2024-01-07-00001</div>
<div class="t" style="left:245.7px;top:420.32px;font-size:9px;color:#3a3a3a;-webkit-text-stroke:0.2px #3a3a3a;letter-spacing:-0.85px;">资产退还单</div>
<div class="t" style="left:326.7px;top:419.62px;font-size:10px;color:#333;-webkit-text-stroke:0.05px #333;transform:scaleX(0.89);transform-origin:0 0;">00031112</div>
<div class="t" style="left:388px;top:420.32px;font-size:9px;color:#3a3a3a;-webkit-text-stroke:0.2px #3a3a3a;letter-spacing:-0.85px;">联想笔记本</div>
<div class="t" style="left:429.5px;top:419.62px;font-size:10px;color:#333;-webkit-text-stroke:0.05px #333;transform:scaleX(0.89);transform-origin:0 0;">1...</div>
<div class="t" style="left:450.2px;top:420.32px;font-size:9px;color:#3a3a3a;-webkit-text-stroke:0.2px #3a3a3a;letter-spacing:-0.85px;">市场部</div>
<div class="t" style="left:559px;top:420.32px;font-size:9px;color:#3a3a3a;-webkit-text-stroke:0.2px #3a3a3a;letter-spacing:-0.85px;">李华</div>
<div class="t" style="left:657.4px;top:420.32px;font-size:9px;color:#3a3a3a;-webkit-text-stroke:0.2px #3a3a3a;letter-spacing:-0.85px;">资产管理部</div>
</body></html>
